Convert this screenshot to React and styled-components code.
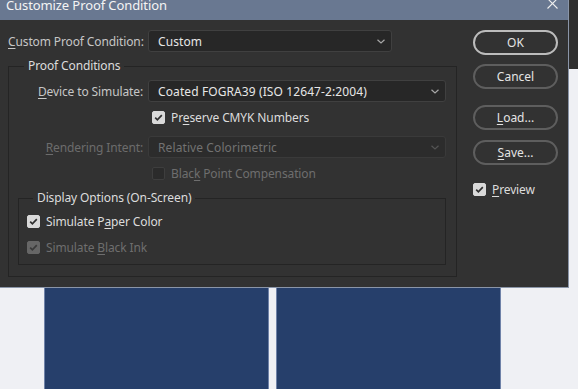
import React from "react";
import styled, { createGlobalStyle } from "styled-components";

const Global = createGlobalStyle`
  html, body { margin: 0; padding: 0; }
  body { background: #eff0f4; font-family: "Noto Sans", "Open Sans", sans-serif; }
`;

const Stage = styled.div`
  position: relative;
  width: 578px;
  height: 389px;
  overflow: hidden;
`;

const Workspace = styled.div`
  display: flex;
  flex-direction: column;
  width: 100%;
  height: 100%;
`;

const TopBar = styled.div`
  height: 69px;
  flex: none;
  background: #2f2f2f;
`;

const Canvas = styled.div`
  flex: 1;
  background: #eff0f4;
  display: flex;
  gap: 7px;
  padding: 90px 0 0 44px;
`;

const Artboard = styled.div`
  width: 225px;
  height: 300px;
  box-sizing: border-box;
  background: #263f6b;
  border-left: 1px solid #6f82a8;
  border-right: 1px solid #6f82a8;
`;

const Dialog = styled.div`
  position: absolute;
  left: 0;
  top: 0;
  width: 569px;
  height: 288px;
  box-sizing: border-box;
  background: #323232;
  border-right: 1px solid #8a95a8;
  border-bottom: 1px solid #8a95a8;
  display: flex;
  flex-direction: column;
  color: #c9c9c9;
  font-size: 12px;
  letter-spacing: -0.12px;
`;

const TitleBar = styled.div`
  height: 20px;
  flex: none;
  background: #697891;
  display: flex;
  align-items: flex-start;
  justify-content: space-between;
  padding: 0 10px 0 6px;
  overflow: hidden;
`;

const TitleText = styled.div`
  margin-top: -2px;
  font-size: 13px;
  line-height: 14px;
  letter-spacing: -0.1px;
  color: #f4f4f4;
`;

const CloseIcon = styled.svg`
  width: 11px;
  height: 11px;
  margin-top: -2px;
`;

const Body = styled.div`
  flex: 1;
  display: flex;
  padding: 10px 0 0 8px;
`;

const MainCol = styled.div`
  width: 449px;
  display: flex;
  flex-direction: column;
`;

const SideCol = styled.div`
  width: 85px;
  margin-left: 16px;
  display: flex;
  flex-direction: column;
`;

const FormRow = styled.div`
  display: flex;
  align-items: center;
  height: 22px;
  margin-top: ${(p) => p.$mt || 0}px;
`;

const Label = styled.label`
  width: ${(p) => p.$w}px;
  flex: none;
  text-align: right;
  margin-right: 5px;
  white-space: nowrap;
  color: ${(p) => (p.$disabled ? "#6c6c6c" : "#c6c6c6")};
  u { text-underline-offset: 2px; }
`;

const Select = styled.div`
  width: ${(p) => p.$w}px;
  height: 22px;
  box-sizing: border-box;
  border-radius: 3px;
  border: 1px solid ${(p) => (p.$disabled ? "#3a3a3a" : "#404040")};
  background: ${(p) => (p.$disabled ? "#2c2c2c" : "#272727")};
  color: ${(p) => (p.$disabled ? "#727272" : "#e6e6e6")};
  display: flex;
  align-items: center;
  justify-content: space-between;
  padding: 0 6px 0 9px;
  white-space: nowrap;
  letter-spacing: 0.1px;
`;

const Chevron = styled.svg`
  width: 8px;
  height: 5px;
  flex: none;
`;

const Group = styled.fieldset`
  margin: ${(p) => p.$margin};
  padding: ${(p) => p.$padding};
  border: 1px solid #242424;
  min-width: 0;
  display: flex;
  flex-direction: column;
`;

const Legend = styled.legend`
  margin-left: ${(p) => p.$ml}px;
  padding: 0 4px;
  line-height: 16px;
  font-size: 12px;
  color: #dcdcdc;
`;

const CheckRow = styled.div`
  display: flex;
  align-items: center;
  height: 18px;
  gap: 6px;
  margin-top: ${(p) => p.$mt || 0}px;
  margin-left: ${(p) => p.$ml || 0}px;
  color: ${(p) => (p.$disabled ? "#6e6e6e" : "#dcdcdc")};
  white-space: nowrap;
  u { text-underline-offset: 2px; }
`;

const Box = styled.span`
  width: 13px;
  height: 13px;
  box-sizing: border-box;
  border-radius: 2px;
  flex: none;
  display: flex;
  align-items: center;
  justify-content: center;
  background: ${(p) =>
    p.$disabled ? (p.$checked ? "#666666" : "#2b2b2b") : "#d9d9d9"};
  border: 1px solid
    ${(p) => (p.$disabled ? (p.$checked ? "#666666" : "#3e3e3e") : "#d9d9d9")};
`;

const Button = styled.button`
  width: 85px;
  height: 25px;
  box-sizing: border-box;
  margin-top: ${(p) => p.$mt || 0}px;
  border-radius: 13px;
  border: 2px solid ${(p) => (p.$primary ? "#bcbcbc" : "#5e5e5e")};
  background: transparent;
  color: #e4e4e4;
  font-family: "Noto Sans", "Open Sans", sans-serif;
  font-size: 12px;
  padding: 0;
  display: flex;
  align-items: center;
  justify-content: center;
  u { text-underline-offset: 2px; }
`;

const ChevronIcon = ({ dim }) => (
  <Chevron viewBox="0 0 8 5">
    <polyline
      points="0.5,0.8 4,4 7.5,0.8"
      fill="none"
      stroke={dim ? "#555" : "#a8a8a8"}
      strokeWidth="1.2"
    />
  </Chevron>
);

const Check = ({ checked, disabled }) => (
  <Box $checked={checked} $disabled={disabled}>
    {checked && (
      <svg width="11" height="11" viewBox="0 0 11 11">
        <polyline
          points="2.2,5.6 4.4,7.8 8.8,3.2"
          fill="none"
          stroke={disabled ? "#3a3a3a" : "#2e2e2e"}
          strokeWidth="1.7"
        />
      </svg>
    )}
  </Box>
);

export default function App() {
  return (
    <>
      <Global />
      <Stage>
        <Workspace>
          <TopBar />
          <Canvas>
            <Artboard />
            <Artboard />
          </Canvas>
        </Workspace>
        <Dialog>
          <TitleBar>
            <TitleText>Customize Proof Condition</TitleText>
            <CloseIcon viewBox="0 0 11 11">
              <path d="M0.5 0.5 L10.5 10.5 M10.5 0.5 L0.5 10.5" stroke="#eeeeee" strokeWidth="1.1" />
            </CloseIcon>
          </TitleBar>
          <Body>
            <MainCol>
              <FormRow>
                <Label $w={135}>
                  <u>C</u>ustom Proof Condition:
                </Label>
                <Select $w={244}>
                  Custom
                  <ChevronIcon />
                </Select>
              </FormRow>
              <Group $margin="6px 0 0 0" $padding="6px 10px 11px 0">
                <Legend $ml={15}>Proof Conditions</Legend>
                <FormRow>
                  <Label $w={134}>
                    <u>D</u>evice to Simulate:
                  </Label>
                  <Select $w={298}>
                    Coated FOGRA39 (ISO 12647-2:2004)
                    <ChevronIcon />
                  </Select>
                </FormRow>
                <CheckRow $mt={6} $ml={143}>
                  <Check checked />
                  <span>
                    Pr<u>e</u>serve CMYK Numbers
                  </span>
                </CheckRow>
                <FormRow $mt={10}>
                  <Label $w={134} $disabled>
                    <u>R</u>endering Intent:
                  </Label>
                  <Select $w={298} $disabled>
                    Relative Colorimetric
                    <ChevronIcon dim />
                  </Select>
                </FormRow>
                <CheckRow $mt={6} $ml={143} $disabled>
                  <Check disabled />
                  <span>
                    Blac<u>k</u> Point Compensation
                  </span>
                </CheckRow>
                <Group $margin="8px 0 0 9px" $padding="6px 8px 8px 8px">
                  <Legend $ml={6}>Display Options (On-Screen)</Legend>
                  <CheckRow>
                    <Check checked />
                    <span>
                      Simulate P<u>a</u>per Color
                    </span>
                  </CheckRow>
                  <CheckRow $mt={8} $disabled>
                    <Check checked disabled />
                    <span>
                      Simulate <u>B</u>lack Ink
                    </span>
                  </CheckRow>
                </Group>
              </Group>
            </MainCol>
            <SideCol>
              <Button $primary>OK</Button>
              <Button $mt={9}>Cancel</Button>
              <Button $mt={16}>
                <u>L</u>oad...
              </Button>
              <Button $mt={10}>
                <u>S</u>ave...
              </Button>
              <CheckRow $mt={15}>
                <Check checked />
                <span>
                  <u>P</u>review
                </span>
              </CheckRow>
            </SideCol>
          </Body>
        </Dialog>
      </Stage>
    </>
  );
}
